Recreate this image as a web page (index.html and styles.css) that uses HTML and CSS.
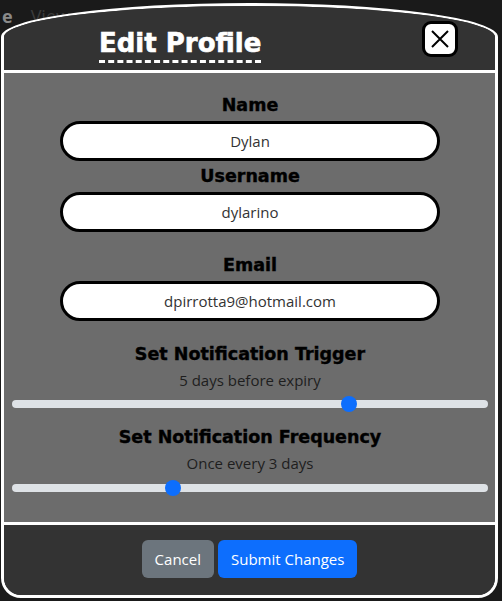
FILE: index.html
```html
<!DOCTYPE html>
<html lang="en">
<head>
<meta charset="utf-8">
<title>Edit Profile</title>
<link rel="stylesheet" href="styles.css">
</head>
<body>
<nav class="nav">
  <span class="nav-brand">e</span>
  <span class="nav-link">View</span>
</nav>
<div class="modal">
  <header class="modal-header">
    <h1 class="modal-title">Edit Profile</h1>
    <button class="close-btn" aria-label="Close">
      <svg width="20" height="20" viewBox="0 0 20 20"><path d="M2 2 L18 18 M18 2 L2 18" stroke="#000" stroke-width="2" fill="none"/></svg>
    </button>
  </header>
  <main class="modal-body">
    <label class="field-label">Name</label>
    <input class="field-input" type="text" value="Dylan">
    <label class="field-label">Username</label>
    <input class="field-input" type="text" value="dylarino">
    <div class="field-error"></div>
    <label class="field-label">Email</label>
    <input class="field-input" type="text" value="dpirrotta9@hotmail.com">
    <label class="field-label section">Set Notification Trigger</label>
    <div class="field-hint">5 days before expiry</div>
    <input class="range range-1" type="range" min="0" max="7" value="5">
    <label class="field-label section2">Set Notification Frequency</label>
    <div class="field-hint">Once every 3 days</div>
    <input class="range range-2" type="range" min="1" max="7" value="3">
  </main>
  <footer class="modal-footer">
    <button class="btn btn-secondary">Cancel</button>
    <button class="btn btn-primary">Submit Changes</button>
  </footer>
</div>
</body>
</html>
```
FILE: styles.css
```css
* { box-sizing: border-box; }
html, body { margin: 0; padding: 0; }
body {
  width: 502px;
  height: 601px;
  background: #1a1a1a;
  font-family: "Open Sans", "Noto Sans", sans-serif;
  overflow: hidden;
  position: relative;
}
.nav {
  display: flex;
  gap: 18px;
  padding: 4px 0 0 2px;
  font-size: 18px;
}
.nav-brand { color: #8a8a8a; font-weight: 700; }
.nav-link { color: #3c3c3c; }

.modal {
  position: absolute;
  left: 1px;
  top: 3px;
  width: 497px;
  height: 595px;
  border: 3px solid #fff;
  border-radius: 50% 50% 20px 20px / 34px 34px 20px 20px;
  overflow: hidden;
  display: flex;
  flex-direction: column;
  background: #333;
}
.modal-header {
  height: 67px;
  flex: none;
  display: flex;
  align-items: flex-start;
  justify-content: space-between;
  padding: 0 37px 0 95px;
  border-bottom: 3px solid #fff;
  background: #333;
}
.modal-title {
  margin: 22px 0 0 0;
  color: #fff;
  font-family: "DejaVu Sans", sans-serif;
  font-weight: 700;
  font-size: 26px;
  line-height: 30px;
  -webkit-text-stroke: 0.6px #fff;
  padding-bottom: 2px;
  border-bottom: 3px dashed #fff;
}
.close-btn {
  width: 36px;
  height: 36px;
  margin-top: 15px;
  padding: 0;
  background: #fff;
  border: 3px solid #000;
  border-radius: 9px;
  display: flex;
  align-items: center;
  justify-content: center;
}
.modal-body {
  flex: none;
  height: 452px;
  background: #6c6c6c;
  border-bottom: 3px solid #fff;
  display: flex;
  flex-direction: column;
  align-items: center;
  padding: 20px 7px 0 8px;
}
.field-label {
  font-family: "DejaVu Sans", sans-serif;
  font-weight: 700;
  font-size: 17.5px;
  line-height: 24px;
  -webkit-text-stroke: 0.4px #000;
  color: #000;
  margin-bottom: 4px;
}
.field-input {
  flex: none;
  width: 380px;
  height: 40px;
  border: 3px solid #000;
  border-radius: 20px;
  background: #fff;
  text-align: center;
  font-family: "Open Sans", sans-serif;
  font-size: 15px;
  color: #333;
  margin: 0 0 3px 0;
  outline: none;
}
.field-error { height: 18px; flex: none; }
.section { margin-top: 18px; }
.section2 { margin-top: 13px; }
.field-hint {
  font-size: 15px;
  line-height: 20px;
  color: #1e1e1e;
}
.range {
  -webkit-appearance: none;
  appearance: none;
  flex: none;
  width: 100%;
  height: 16px;
  margin: 6px 0 0 0;
  background: transparent;
}
.range-2 { margin-top: 7px; }
.range::-webkit-slider-runnable-track {
  height: 8px;
  background: #dee2e6;
  border-radius: 4px;
}
.range::-webkit-slider-thumb {
  -webkit-appearance: none;
  appearance: none;
  width: 16px;
  height: 16px;
  margin-top: -4px;
  border-radius: 50%;
  background: #0d6efd;
  border: 0;
}
.modal-footer {
  flex: 1;
  display: flex;
  justify-content: center;
  align-items: center;
  gap: 4px;
  padding-bottom: 2px;
  background: #333;
}
.btn {
  height: 38px;
  padding: 0 12px;
  border: 1px solid transparent;
  border-radius: 6px;
  color: #fff;
  font-family: "Open Sans", sans-serif;
  font-size: 15px;
}
.btn-secondary { background: #6c757d; }
.btn-primary { background: #0d6efd; }
```
